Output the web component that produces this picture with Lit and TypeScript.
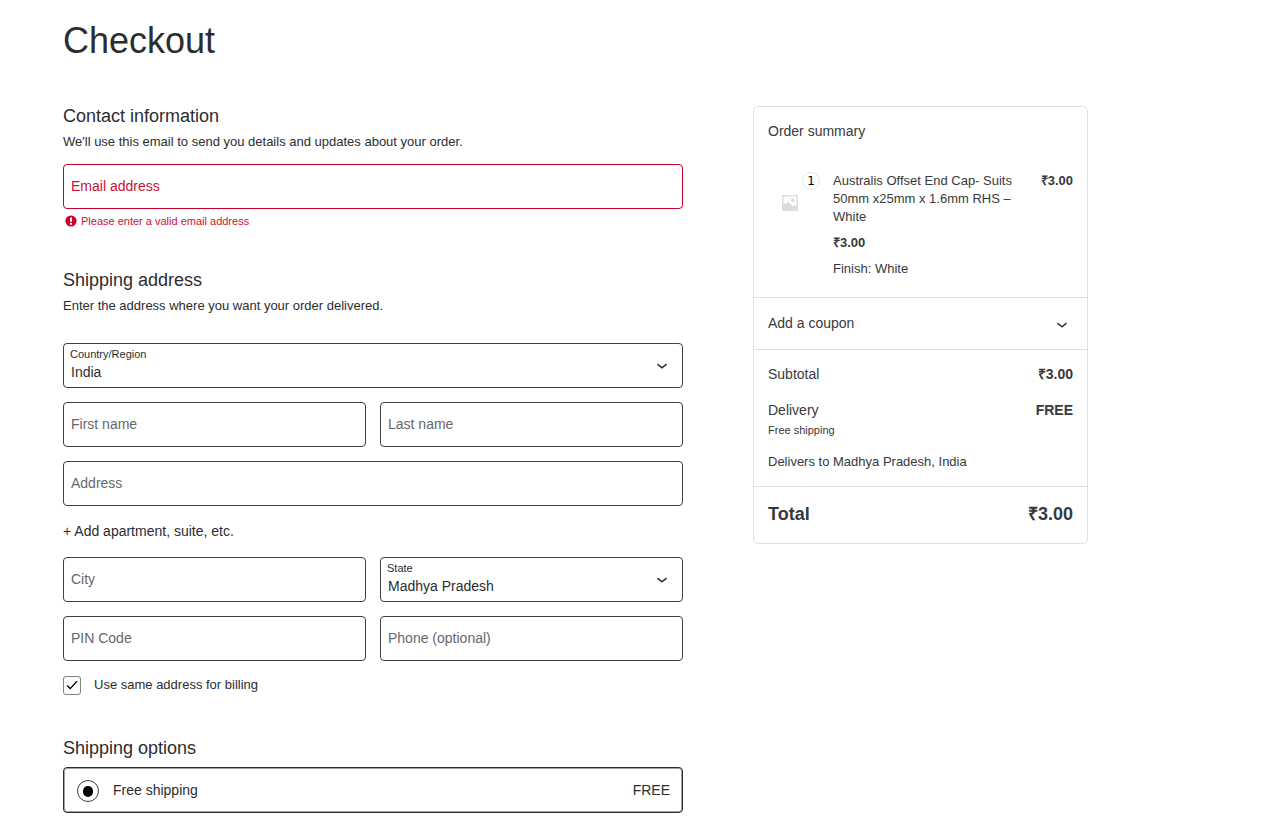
import { LitElement, html, css } from "lit";
import { customElement, property, state } from "lit/decorators.js";

const base = css`
  *,
  *::before,
  *::after {
    box-sizing: border-box;
  }
  h1,
  h2,
  p {
    margin: 0;
    font-weight: 400;
  }
  button,
  input,
  select {
    font: inherit;
    color: inherit;
    margin: 0;
  }
`;

const chevron = html`<svg class="chevron" viewBox="0 0 24 24" aria-hidden="true">
  <path d="M17.5 11.6L12 16l-5.5-4.4.9-1.2L12 14l4.5-3.6 1 1.2z" fill="currentColor" />
</svg>`;

@customElement("text-field")
class TextField extends LitElement {
  @property() label = "";
  @property() type = "text";
  @property() error = "";
  @state() private value = "";

  static styles = [
    base,
    css`
      :host {
        display: block;
      }
      .box {
        display: grid;
        align-items: center;
      }
      .label,
      .input {
        grid-area: 1 / 1;
      }
      .label {
        z-index: 1;
        padding: 0 8px 2px;
        line-height: 20px;
        color: #66686a;
        pointer-events: none;
      }
      .input {
        width: 100%;
        height: 45px;
        padding: 16px 7px 0;
        border: 1px solid #3f4143;
        border-radius: 4px;
        background: #fff;
        outline: none;
      }
      .input:focus {
        box-shadow: 0 0 0 1px #3f4143;
      }
      .filled .label {
        align-self: start;
        padding: 4px 7px 0;
        font-size: 11px;
        line-height: 14px;
      }
      .invalid .label,
      .error {
        color: #cc1034;
      }
      .invalid .input {
        border-color: #cc0029;
      }
      .error {
        display: flex;
        align-items: center;
        gap: 4px;
        margin-top: 4px;
        padding-left: 2px;
        font-size: 11px;
        line-height: 16px;
      }
      .icon {
        width: 12px;
        height: 12px;
      }
    `,
  ];

  private onInput(e: Event) {
    this.value = (e.target as HTMLInputElement).value;
  }

  render() {
    return html`
      <div class="box ${this.error ? "invalid" : ""} ${this.value ? "filled" : ""}">
        <label class="label" for="field">${this.label}</label>
        <input
          id="field"
          class="input"
          type=${this.type}
          .value=${this.value}
          aria-invalid=${this.error ? "true" : "false"}
          @input=${this.onInput}
        />
      </div>
      ${this.error
        ? html`<p class="error" role="alert">
            <svg class="icon" viewBox="0 0 12 12" aria-hidden="true">
              <circle cx="6" cy="6" r="5.6" fill="#cc0029" />
              <path d="M5 2.4h2v4.4H5zM5 7.9h2v1.8H5z" fill="#fff" />
            </svg>
            <span>${this.error}</span>
          </p>`
        : ""}
    `;
  }
}

@customElement("select-field")
class SelectField extends LitElement {
  @property() label = "";
  @property({ type: Array }) options: string[] = [];

  static styles = [
    base,
    css`
      :host {
        display: block;
      }
      .box {
        display: grid;
      }
      .label,
      .select,
      .chevron {
        grid-area: 1 / 1;
      }
      .label,
      .chevron {
        z-index: 1;
        pointer-events: none;
      }
      .label {
        padding: 4px 7px 0;
        font-size: 11px;
        line-height: 14px;
      }
      .select {
        width: 100%;
        height: 45px;
        padding: 12px 40px 0 7px;
        border: 1px solid #3f4143;
        border-radius: 4px;
        background: #fff;
        color: #2b2d2f;
        appearance: none;
      }
      .chevron {
        justify-self: end;
        align-self: center;
        width: 22px;
        height: 22px;
        margin: 0 10px 1px 0;
      }
    `,
  ];

  render() {
    return html`<div class="box">
      <label class="label" for="field">${this.label}</label>
      <select id="field" class="select">
        ${this.options.map((o) => html`<option>${o}</option>`)}
      </select>
      ${chevron}
    </div>`;
  }
}

@customElement("order-summary")
class OrderSummary extends LitElement {
  static styles = [
    base,
    css`
      :host {
        display: block;
        border: 1px solid #e0e0e1;
        border-radius: 5px;
        color: #38393b;
      }
      .section {
        padding: 14px;
        border-top: 1px solid #e0e0e1;
      }
      .heading {
        padding: 14px 14px 0;
        font-size: 14px;
        line-height: 20px;
      }
      .item {
        display: grid;
        grid-template-columns: 43px minmax(0, 1fr) auto;
        column-gap: 22px;
        padding: 31px 14px 19px;
        font-size: 13px;
        line-height: 18px;
      }
      .thumb {
        position: relative;
        display: grid;
        place-items: center;
        width: 43px;
        height: 43px;
        margin-top: 9px;
      }
      .picture {
        width: 16px;
        height: 16px;
      }
      .count {
        position: absolute;
        top: -9px;
        right: -9px;
        display: grid;
        place-items: center;
        width: 18px;
        height: 18px;
        border: 1px solid #e3e3e4;
        border-radius: 9px;
        background: #fff;
        color: #000;
        font-family: "DejaVu Sans", sans-serif;
        font-size: 12px;
        line-height: 16px;
      }
      .details {
        display: grid;
        gap: 8px;
      }
      .bold {
        font-weight: 700;
      }
      .coupon {
        display: flex;
        align-items: center;
        justify-content: space-between;
        width: 100%;
        border-width: 1px 0 0;
        border-style: solid;
        border-color: #e0e0e1;
        background: none;
        text-align: left;
        line-height: 23px;
        cursor: pointer;
      }
      .chevron {
        width: 22px;
        height: 22px;
      }
      .row {
        display: flex;
        justify-content: space-between;
        line-height: 20px;
      }
      .delivery {
        margin-top: 16px;
      }
      .method {
        font-size: 11px;
        line-height: 20px;
      }
      .destination {
        margin-top: 12px;
        font-size: 13px;
        line-height: 20px;
      }
      .grand {
        padding: 15px 14px 17px;
      }
      .grand .row {
        font-size: 18px;
        line-height: 24px;
      }
    `,
  ];

  render() {
    return html`
      <h2 class="heading">Order summary</h2>
      <div class="item">
        <div class="thumb">
          <svg class="picture" viewBox="0 0 16 16" aria-hidden="true">
            <path d="M0 0h16v16H0z" fill="#d9dce0" />
            <path d="M1.5 1.5h13v10.2l-1.9-1.5-1.7 1-4.8-4.4-2.2 2.4-2.4-1.4z" fill="#fff" />
            <circle cx="10.8" cy="5.2" r="1.9" fill="#d9dce0" />
          </svg>
          <span class="count">1</span>
        </div>
        <div class="details">
          <p>Australis Offset End Cap- Suits 50mm x25mm x 1.6mm RHS – White</p>
          <p class="bold">₹3.00</p>
          <p>Finish: White</p>
        </div>
        <p class="bold">₹3.00</p>
      </div>
      <button class="section coupon" type="button" aria-expanded="false">
        <span>Add a coupon</span>${chevron}
      </button>
      <div class="section">
        <div class="row"><span>Subtotal</span><span class="bold">₹3.00</span></div>
        <div class="row delivery"><span>Delivery</span><span class="bold">FREE</span></div>
        <p class="method">Free shipping</p>
        <p class="destination">Delivers to Madhya Pradesh, India</p>
      </div>
      <div class="section grand">
        <div class="row bold"><span>Total</span><span>₹3.00</span></div>
      </div>
    `;
  }
}

@customElement("app-root")
class AppRoot extends LitElement {
  static styles = [
    base,
    css`
      :host {
        display: block;
        padding: 19px 63px 20px;
        background: #fff;
        color: #2b2d2f;
        font-family: "Liberation Sans", Arial, sans-serif;
        font-size: 14px;
      }
      .title {
        font-size: 36px;
        line-height: 44px;
      }
      .layout {
        display: grid;
        grid-template-columns: minmax(0, 620fr) minmax(0, 335fr);
        column-gap: 70px;
        align-items: start;
        max-width: 1025px;
        margin-top: 43px;
      }
      .form {
        display: grid;
        gap: 39px;
        margin-top: -2px;
      }
      .heading {
        font-size: 18px;
        line-height: 24px;
      }
      .hint {
        margin-top: 4px;
        font-size: 13px;
        line-height: 20px;
      }
      .contact {
        margin-top: 12px;
      }
      .address {
        display: grid;
        grid-template-columns: repeat(2, minmax(0, 1fr));
        gap: 14px;
        margin-top: 27px;
        padding-bottom: 2px;
      }
      .wide {
        grid-column: 1 / -1;
      }
      .add {
        justify-self: start;
        padding: 0;
        border: 0;
        background: none;
        line-height: 23px;
        cursor: pointer;
      }
      .same {
        display: flex;
        align-items: center;
        gap: 13px;
        font-size: 13px;
        line-height: 20px;
      }
      .control {
        display: grid;
        place-items: center;
      }
      .control > * {
        grid-area: 1 / 1;
      }
      .check,
      .radio {
        appearance: none;
        background: #fff;
      }
      .check {
        width: 18px;
        height: 19px;
        border: 1px solid #808183;
        border-radius: 3px;
      }
      .mark {
        width: 12px;
        height: 12px;
        pointer-events: none;
        visibility: hidden;
      }
      :checked + .mark {
        visibility: visible;
      }
      .option {
        display: flex;
        align-items: center;
        gap: 14px;
        height: 46px;
        margin-top: 7px;
        padding: 0 12px 0 13px;
        border: 1px solid #2b2d2f;
        border-radius: 4px;
        box-shadow: inset 0 0 0 1px #a0a1a2;
        line-height: 20px;
      }
      .radio {
        width: 22px;
        height: 22px;
        border: 1px solid #3f4143;
        border-radius: 11px;
      }
      .dot {
        width: 10px;
        height: 11px;
        border-radius: 6px;
        background: #000;
      }
      .name {
        flex: 1;
      }
      .option .control {
        padding-top: 2px;
      }
    `,
  ];

  render() {
    return html`
      <h1 class="title">Checkout</h1>
      <div class="layout">
        <form class="form">
          <section>
            <h2 class="heading">Contact information</h2>
            <p class="hint">We'll use this email to send you details and updates about your order.</p>
            <text-field
              class="contact"
              label="Email address"
              type="email"
              error="Please enter a valid email address"
            ></text-field>
          </section>
          <section>
            <h2 class="heading">Shipping address</h2>
            <p class="hint">Enter the address where you want your order delivered.</p>
            <div class="address">
              <select-field class="wide" label="Country/Region" .options=${["India"]}></select-field>
              <text-field label="First name"></text-field>
              <text-field label="Last name"></text-field>
              <text-field class="wide" label="Address"></text-field>
              <button class="add wide" type="button">+ Add apartment, suite, etc.</button>
              <text-field label="City"></text-field>
              <select-field label="State" .options=${["Madhya Pradesh"]}></select-field>
              <text-field label="PIN Code"></text-field>
              <text-field label="Phone (optional)" type="tel"></text-field>
              <label class="same wide">
                <span class="control">
                  <input class="check" type="checkbox" checked />
                  <svg class="mark" viewBox="0 0 12 12" aria-hidden="true">
                    <path d="M1.2 6.6l3 3L11 2.2" fill="none" stroke="#000" stroke-width="1.4" />
                  </svg>
                </span>
                <span>Use same address for billing</span>
              </label>
            </div>
          </section>
          <section>
            <h2 class="heading">Shipping options</h2>
            <label class="option">
              <span class="control">
                <input class="radio" type="radio" name="shipping" checked />
                <span class="mark dot"></span>
              </span>
              <span class="name">Free shipping</span>
              <span>FREE</span>
            </label>
          </section>
        </form>
        <order-summary></order-summary>
      </div>
    `;
  }
}
